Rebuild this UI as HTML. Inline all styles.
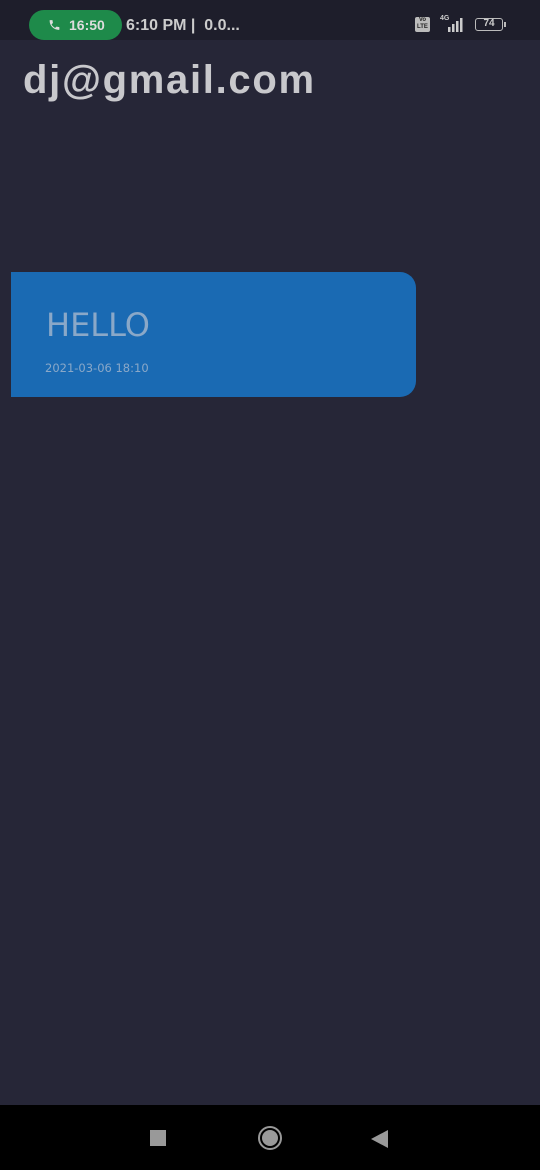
<!DOCTYPE html><html><head><meta charset="utf-8"><style>
body{margin:0;width:540px;height:1170px;background:#262637;position:relative;overflow:hidden;font-family:"Liberation Sans",sans-serif}
.sb{position:absolute;top:0;left:0;width:540px;height:40px;background:#1e1e2b}
.pill{position:absolute;left:29px;top:10px;width:93px;height:30px;border-radius:15px;background:#1e8a4a;color:#ddd;font-weight:bold;font-size:14px;line-height:30px;padding-left:40px;box-sizing:border-box}
.t{position:absolute;left:126px;top:17px;color:#ccc;font-weight:bold;font-size:16px}
h1{position:absolute;left:23px;top:58px;margin:0;font-size:40px;color:#c8c8cc;font-weight:bold;letter-spacing:1.7px}
.card{position:absolute;left:11px;top:272px;width:405px;height:125px;background:#1a6ab3;border-radius:0 16px 16px 0}
.h{position:absolute;left:35px;top:34px;font-family:"DejaVu Sans",sans-serif;font-size:32px;color:#8aa8c8}
.d{position:absolute;left:34px;top:89px;font-family:"DejaVu Sans",sans-serif;font-size:11.5px;color:#8aa8c8}
.nav{position:absolute;top:1105px;left:0;width:540px;height:65px;background:#000}
</style></head><body>
<div class="sb"><div class="pill"><svg style="position:absolute;left:19px;top:8px" width="13" height="14" viewBox="0 0 24 24"><path fill="#ddd" d="M6.6 10.8c1.4 2.8 3.8 5.1 6.6 6.6l2.2-2.2c.3-.3.7-.4 1-.2 1.1.4 2.3.6 3.6.6.6 0 1 .4 1 1V20c0 .6-.4 1-1 1C10.6 21 3 13.4 3 4c0-.6.4-1 1-1h3.5c.6 0 1 .4 1 1 0 1.3.2 2.5.6 3.6.1.3 0 .7-.2 1z"/></svg>16:50</div>
<div class="t">6:10 PM |&nbsp; 0.0...</div>
<div style="position:absolute;left:415px;top:17px;width:15px;height:15px;background:#bbb;border-radius:2px;font-size:6px;color:#222;text-align:center;line-height:7px;font-weight:bold">Vo<br>LTE</div>
<div style="position:absolute;left:440px;top:15px;font-size:7px;color:#ccc;font-weight:bold">4G</div>
<svg style="position:absolute;left:444px;top:17px" width="22" height="16"><rect x="4" y="10" width="2.5" height="5" fill="#ccc"/><rect x="8" y="7" width="2.5" height="8" fill="#ccc"/><rect x="12" y="4" width="2.5" height="11" fill="#ccc"/><rect x="16" y="1" width="2.5" height="14" fill="#ccc"/></svg>
<div style="position:absolute;left:475px;top:18px;width:28px;height:13px;border:1.5px solid #bbb;border-radius:3px;box-sizing:border-box;font-size:10px;color:#ccc;text-align:center;line-height:10px;font-weight:bold">74</div>
<div style="position:absolute;left:504px;top:22px;width:2px;height:5px;background:#bbb"></div>
</div>
<h1>dj@gmail.com</h1>
<div class="card"><div class="h">HELLO</div><div class="d">2021-03-06 18:10</div></div>
<div class="nav">
<div style="position:absolute;left:150px;top:25px;width:16px;height:16px;background:#999"></div>
<div style="position:absolute;left:258px;top:21px;width:20px;height:20px;border:2px solid #999;border-radius:50%"></div>
<div style="position:absolute;left:262px;top:25px;width:16px;height:16px;background:#999;border-radius:50%"></div>
<svg style="position:absolute;left:371px;top:25px" width="18" height="18"><path d="M17 0V18L0 9Z" fill="#999"/></svg>
</div>
</body></html>
